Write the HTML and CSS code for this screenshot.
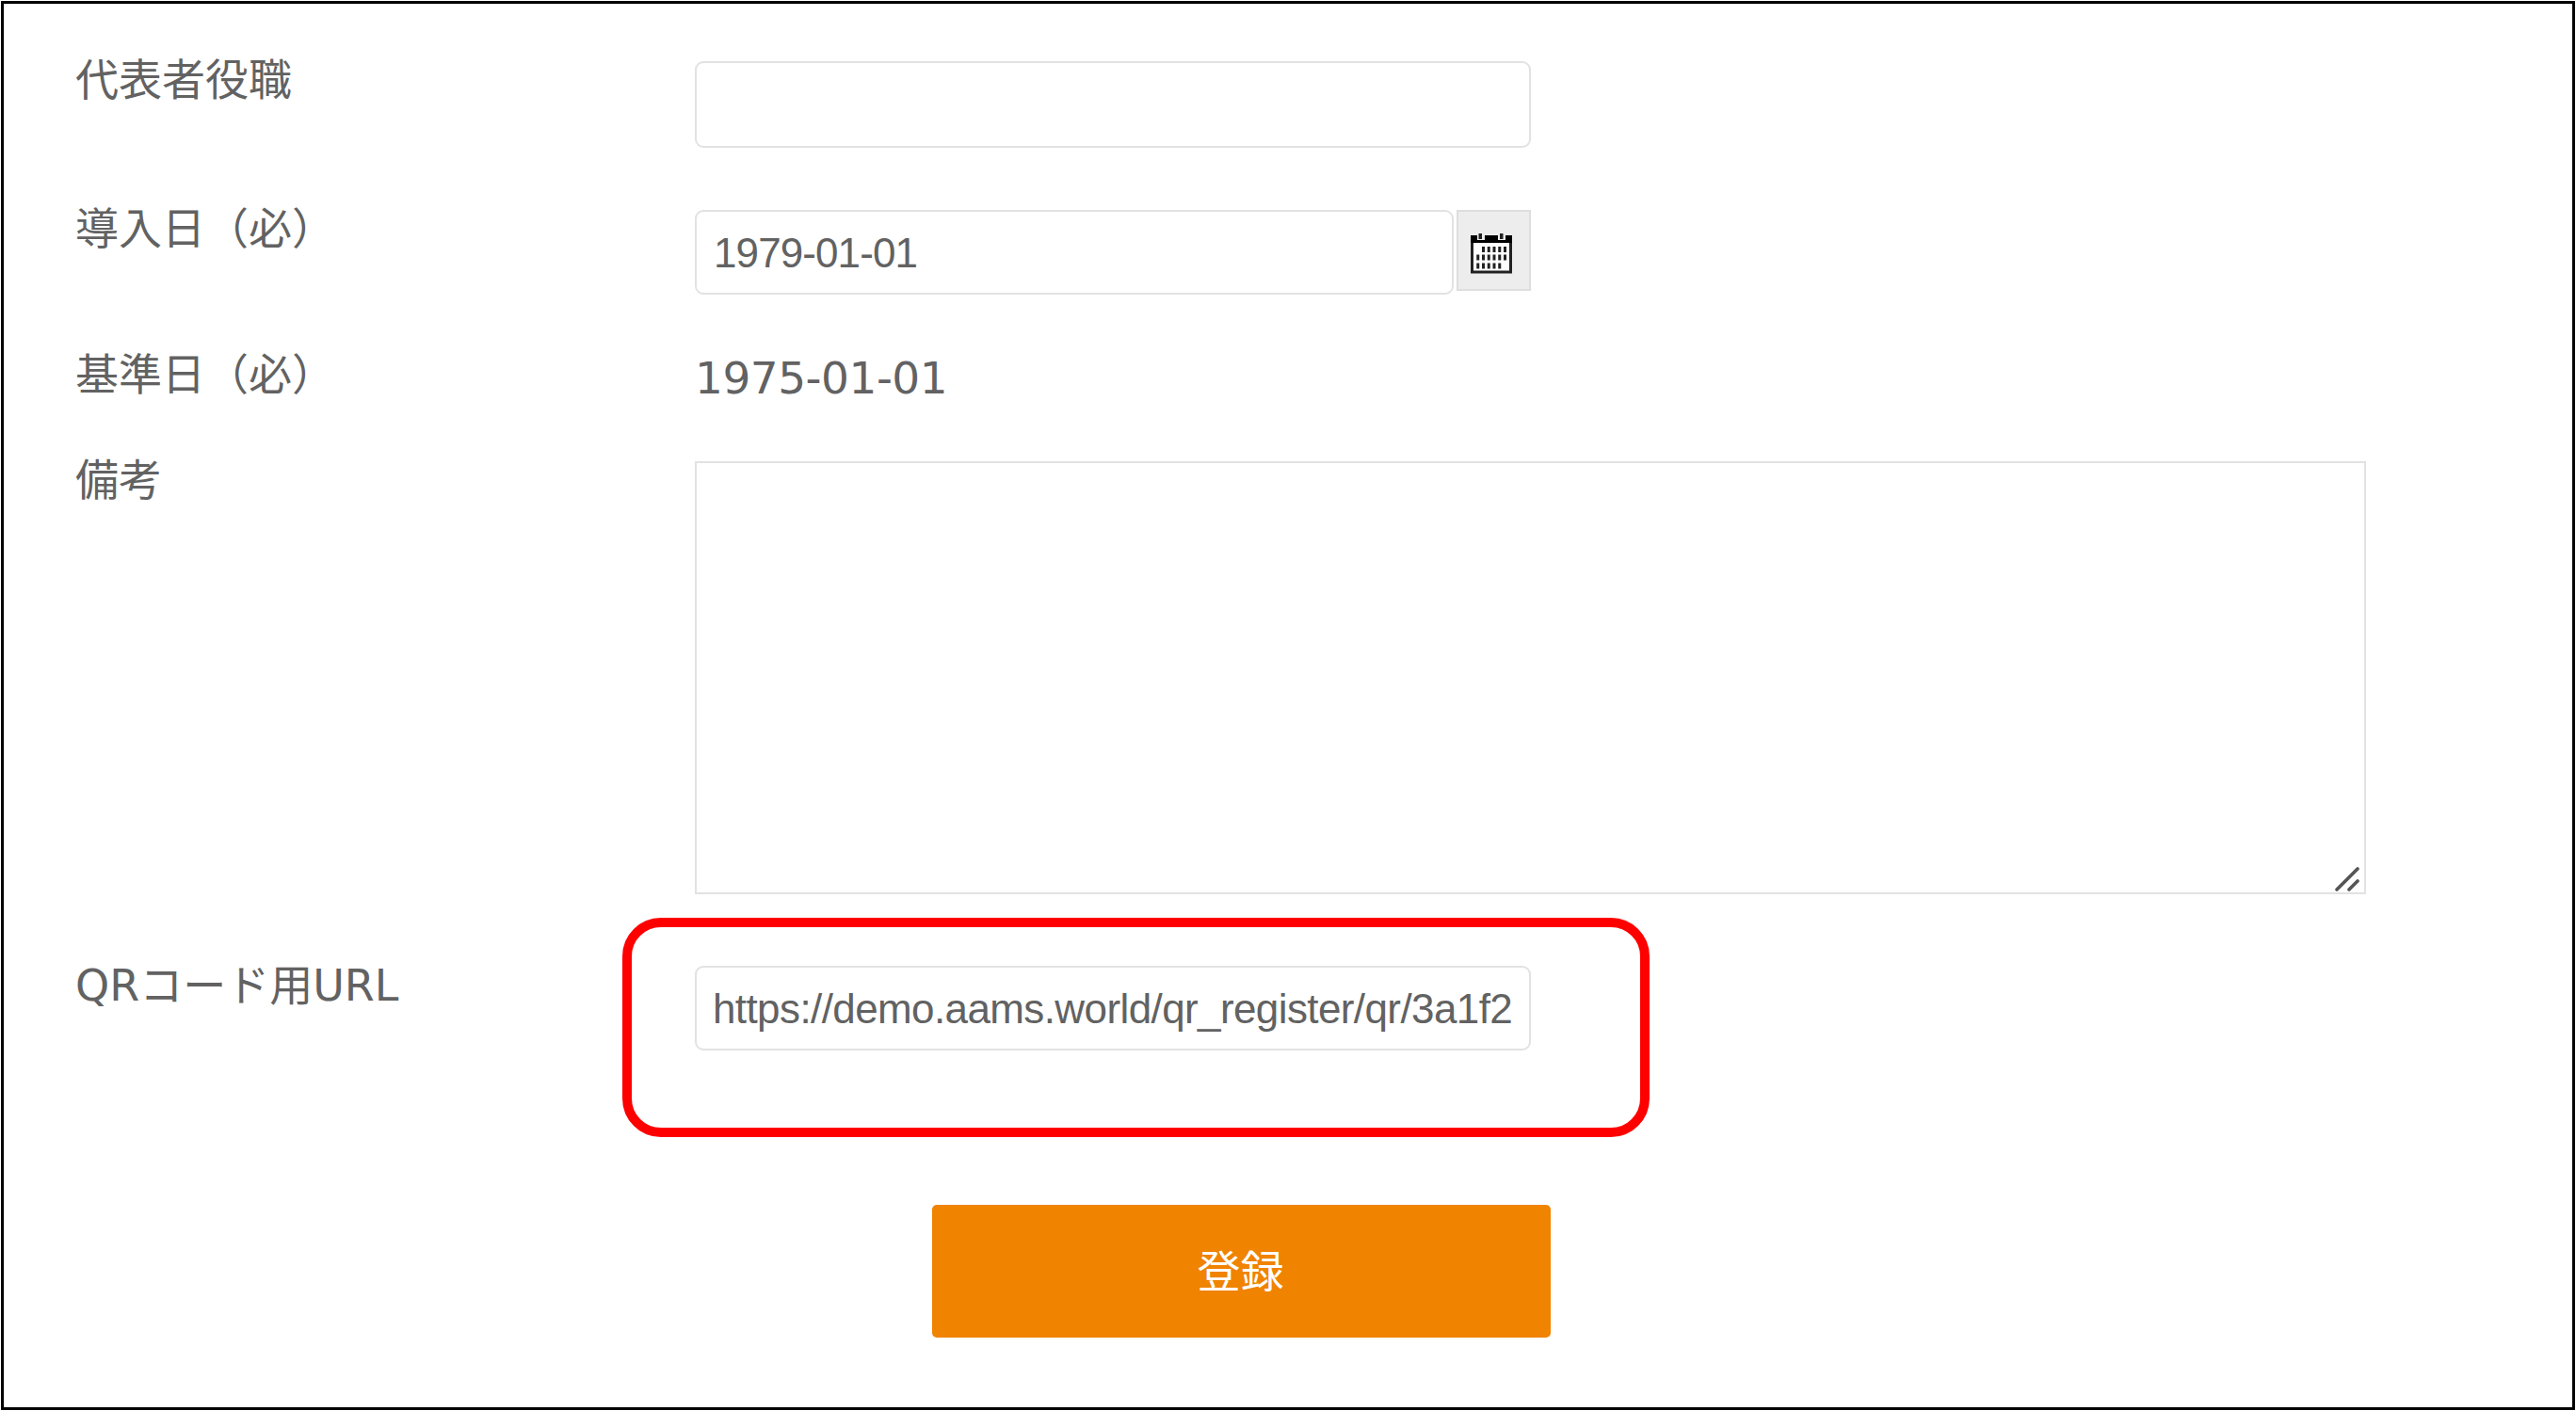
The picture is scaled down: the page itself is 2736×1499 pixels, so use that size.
FILE: index.html
```html
<!DOCTYPE html>
<html lang="ja">
<head>
<meta charset="utf-8">
<title>登録</title>
<link rel="stylesheet" href="styles.css">
</head>
<body>
<form class="panel">
  <div class="row row-title">
    <label class="label" for="post">代表者役職</label>
    <input class="input input-tall" id="post" type="text">
  </div>
  <div class="row row-start">
    <label class="label" for="start">導入日（必）</label>
    <div class="date">
      <input class="input input-date" id="start" type="text" value="1979-01-01">
      <button class="calendar" type="button" aria-label="カレンダー">
        <svg class="calendar-icon" viewBox="0 0 44 46">
          <rect x="1.5" y="6" width="41" height="37" fill="#fff" stroke="#222" stroke-width="3"/>
          <path d="M0 4h44v8H0z" fill="#000"/>
          <path d="M7 1h8v8H7zM29 1h8v8h-8z" fill="#ededed"/>
          <path d="M8.500 2h3.500v6H8.500zM31 2h3.500v6H31z" fill="#222"/>
          <path d="M12 19H39M6.250 27.500H39M6.250 36.500H34" stroke="#222" stroke-width="6" stroke-dasharray="3 2.750" fill="none"/>
        </svg>
      </button>
    </div>
  </div>
  <div class="row row-base">
    <span class="label">基準日（必）</span>
    <span class="value">1975-01-01</span>
  </div>
  <div class="row row-note">
    <label class="label" for="note">備考</label>
    <div class="note">
      <textarea class="textarea" id="note"></textarea>
      <svg class="grip" viewBox="0 0 26 26"><path d="M2 24L24 2M15 24L24 15" stroke="#555" stroke-width="3.6" stroke-linecap="round"/></svg>
    </div>
  </div>
  <div class="row row-url">
    <label class="label" for="url">QRコード用URL</label>
    <div class="url">
      <input class="input input-url" id="url" type="text" value="https://demo.aams.world/qr_register/qr/3a1f2">
      <div class="highlight"></div>
    </div>
  </div>
  <button class="submit" type="button">登録</button>
</form>
</body>
</html>
```
FILE: styles.css
```css
* { box-sizing: border-box; }

body {
  margin: 0;
  background: #fff;
  color: #626262;
  font-family: "DejaVu Sans", "Noto Sans CJK JP", sans-serif;
  font-size: 46px;
}

.panel {
  display: flex;
  flex-direction: column;
  width: 2734px;
  height: 1497px;
  margin: 1px;
  padding: 56px 0 0 76px;
  border: 3px solid #000;
}

.row {
  display: grid;
  grid-template-columns: 658px 1775px;
  align-items: start;
  flex: none;
}

.row-title { height: 158px; }
.row-start { height: 155px; }
.row-base { height: 112px; }
.row-note { height: 537px; }
.row-url { height: 258px; }

.label {
  padding-top: 2px;
  line-height: 46px;
  white-space: nowrap;
}

.input {
  width: 888px;
  height: 90px;
  padding: 0 17px;
  border: 2px solid #e2e2e2;
  border-radius: 9px;
  background: #fff;
  color: #626262;
  font-family: "Liberation Sans", Arial, sans-serif;
  font-size: 44px;
}

.input-tall { height: 92px; margin-top: 5px; }
.input-date { width: 806px; padding: 1px 18px 0; letter-spacing: -0.9px; }
.input-url { padding-top: 2px; letter-spacing: -0.6px; }

.date {
  display: flex;
  gap: 3px;
  padding-top: 5px;
}

.calendar {
  display: flex;
  width: 79px;
  height: 86px;
  padding: 21px 0 0 13px;
  border: 2px solid #dedede;
  background: #ededed;
}

.calendar-icon { width: 44px; height: 46px; }

.value {
  padding-top: 6px;
  font-size: 47px;
  line-height: 46px;
  letter-spacing: -0.5px;
}

.note {
  position: relative;
  height: 460px;
  margin-top: 5px;
}

.textarea {
  display: block;
  width: 100%;
  height: 100%;
  border: 2px solid #e2e2e2;
  resize: none;
}

.grip {
  position: absolute;
  right: 7px;
  bottom: 3px;
  width: 26px;
  height: 26px;
}

.url {
  position: relative;
  display: flex;
  padding-top: 4px;
}

.highlight {
  position: absolute;
  left: -77px;
  top: -47px;
  width: 1091px;
  height: 233px;
  border: 10px solid #f00;
  border-radius: 41px;
  pointer-events: none;
}

.submit {
  flex: none;
  width: 657px;
  height: 141px;
  margin-left: 910px;
  padding: 0 2px 7px 0;
  border: 0;
  border-radius: 5px;
  background: #f08300;
  color: #fff;
  font-family: "Noto Sans CJK JP", sans-serif;
  font-size: 46px;
}
```
